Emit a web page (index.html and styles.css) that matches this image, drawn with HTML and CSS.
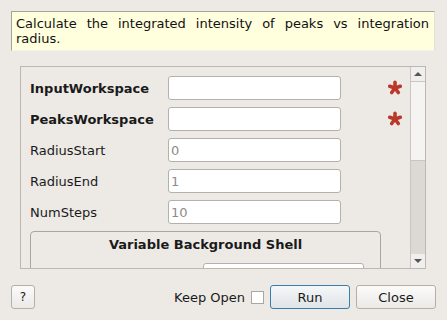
FILE: index.html
```html
<!DOCTYPE html>
<html lang="en">
<head>
    <meta charset="UTF-8">
    <title>IntegratePeaksCheck</title>
    <link rel="stylesheet" href="styles.css">
</head>
<body>

<div class="dialog">
    <!-- Algorithm summary -->
    <div class="description">Calculate the integrated intensity of peaks vs integration radius.</div>

    <!-- Property list -->
    <div class="scroll-frame">
        <div class="scroll-content">
            <div class="prop-row">
                <label class="prop-label mandatory">InputWorkspace</label>
                <input class="prop-input" type="text">
                <svg class="star" width="16" height="16" viewBox="0 0 16 16">
                    <g stroke="#b9392b" stroke-width="3.6" stroke-linecap="round">
                        <line x1="8" y1="8" x2="8" y2="2.4"/>
                        <line x1="8" y1="8" x2="13.3" y2="6.3"/>
                        <line x1="8" y1="8" x2="11.3" y2="12.5"/>
                        <line x1="8" y1="8" x2="4.7" y2="12.5"/>
                        <line x1="8" y1="8" x2="2.7" y2="6.3"/>
                    </g>
                </svg>
            </div>
            <div class="prop-row">
                <label class="prop-label mandatory">PeaksWorkspace</label>
                <input class="prop-input" type="text">
                <svg class="star" width="16" height="16" viewBox="0 0 16 16">
                    <g stroke="#b9392b" stroke-width="3.6" stroke-linecap="round">
                        <line x1="8" y1="8" x2="8" y2="2.4"/>
                        <line x1="8" y1="8" x2="13.3" y2="6.3"/>
                        <line x1="8" y1="8" x2="11.3" y2="12.5"/>
                        <line x1="8" y1="8" x2="4.7" y2="12.5"/>
                        <line x1="8" y1="8" x2="2.7" y2="6.3"/>
                    </g>
                </svg>
            </div>
            <div class="prop-row">
                <label class="prop-label">RadiusStart</label>
                <input class="prop-input" type="text" placeholder="0">
            </div>
            <div class="prop-row">
                <label class="prop-label">RadiusEnd</label>
                <input class="prop-input" type="text" placeholder="1">
            </div>
            <div class="prop-row">
                <label class="prop-label">NumSteps</label>
                <input class="prop-input" type="text" placeholder="10">
            </div>

            <!-- Group box -->
            <div class="group-box">
                <div class="group-title">Variable Background Shell</div>
                <div class="group-row">
                    <input class="group-input" type="text">
                </div>
                <div class="group-row">
                    <input class="group-input" type="text">
                </div>
            </div>
        </div>

        <div class="scrollbar">
            <div class="sb-btn"><span class="arrow-up"></span></div>
            <div class="sb-handle"></div>
            <div class="sb-track"></div>
            <div class="sb-btn"><span class="arrow-down"></span></div>
        </div>
    </div>

    <!-- Buttons -->
    <div class="button-bar">
        <button class="btn help-btn">?</button>
        <div class="spacer"></div>
        <label class="keep-open">Keep Open <span class="checkbox"></span></label>
        <button class="btn run-btn">Run</button>
        <button class="btn close-btn">Close</button>
    </div>
</div>

</body>
</html>
```

FILE: styles.css
```css
body {
    font-family: 'DejaVu Sans', sans-serif;
    font-size: 13px;
    background: #edeae6;
    color: #1a1a1a;
    margin: 0;
    padding: 0;
}
.dialog {
    width: 447px;
    height: 320px;
    padding: 11px 11px 0 11px;
    box-sizing: border-box;
    display: flex;
    flex-direction: column;
}
.description {
    height: 40px;
    box-sizing: border-box;
    padding: 4px 5px 0 4px;
    background: #ffffdd;
    color: #111;
    border-top: 1px solid #a6a29c;
    border-left: 1px solid #a6a29c;
    border-right: 1px solid #e3e0db;
    border-bottom: 1px solid #f4f2ef;
    text-align: justify;
    line-height: 15px;
    margin-right: 1px;
}
.scroll-frame {
    margin: 15px 10px 0 9px;
    height: 203px;
    box-sizing: border-box;
    border: 1px solid #bbb7b1;
    border-right: none;
    display: flex;
    overflow: hidden;
}
.scroll-content {
    flex: 1;
    padding: 9px 0 0 9px;
}
.prop-row {
    display: flex;
    align-items: center;
    height: 24px;
    margin-bottom: 7px;
}
.prop-label {
    width: 138px;
}
.mandatory {
    font-weight: bold;
}
.prop-input {
    width: 173px;
    height: 24px;
    box-sizing: border-box;
    border: 1px solid #b4b0aa;
    border-radius: 3px;
    background: white;
    padding: 0 2px;
    font-family: 'DejaVu Sans', sans-serif;
    font-size: 13px;
    margin: 0;
}
.prop-input::placeholder {
    color: #8e8c89;
}
.star {
    margin-left: 46px;
}
.group-box {
    margin-top: 4px;
    width: 351px;
    height: 90px;
    box-sizing: border-box;
    border: 1px solid #a9a59f;
    border-radius: 4px;
}
.group-title {
    text-align: center;
    font-weight: bold;
    padding-top: 5px;
    height: 20px;
}
.group-row {
    display: flex;
    margin: 6px 0 0 172px;
}
.group-input {
    width: 161px;
    height: 24px;
    box-sizing: border-box;
    border: 1px solid #b4b0aa;
    border-radius: 3px;
    background: white;
    margin: 0;
}
.scrollbar {
    width: 14px;
    display: flex;
    flex-direction: column;
    border-left: 1px solid #c9c6c1;
    border-right: 1px solid #bbb7b1;
    background: #dcd9d5;
}
.sb-btn {
    height: 14px;
    background: #f1efed;
    display: flex;
    justify-content: center;
    align-items: center;
}
.arrow-up {
    width: 0;
    height: 0;
    border-left: 4px solid transparent;
    border-right: 4px solid transparent;
    border-bottom: 4px solid #555;
}
.arrow-down {
    width: 0;
    height: 0;
    border-left: 4px solid transparent;
    border-right: 4px solid transparent;
    border-top: 4px solid #555;
}
.sb-handle {
    height: 78px;
    background: #f5f4f2;
    border-top: 1px solid #c9c6c1;
    border-bottom: 1px solid #c9c6c1;
}
.sb-track {
    flex: 1;
}
.button-bar {
    display: flex;
    align-items: center;
    margin-top: 16px;
    height: 24px;
}
.spacer {
    flex: 1;
}
.btn {
    height: 24px;
    box-sizing: border-box;
    border: 1px solid #b3afa9;
    border-radius: 3px;
    background: linear-gradient(#fbfbfa, #ebe9e6);
    font-family: 'DejaVu Sans', sans-serif;
    font-size: 13px;
    color: #1a1a1a;
    padding: 0;
}
.help-btn {
    width: 24px;
    font-size: 12px;
}
.keep-open {
    display: flex;
    align-items: center;
    margin-right: 6px;
}
.checkbox {
    display: inline-block;
    width: 13px;
    height: 13px;
    box-sizing: border-box;
    border: 1px solid #aaa6a0;
    background: white;
    margin-left: 6px;
}
.run-btn {
    width: 80px;
    border-color: #3a7cab;
    background: linear-gradient(#f5f7f8, #dfe4e8);
    margin-right: 6px;
}
.close-btn {
    width: 80px;
}
```
